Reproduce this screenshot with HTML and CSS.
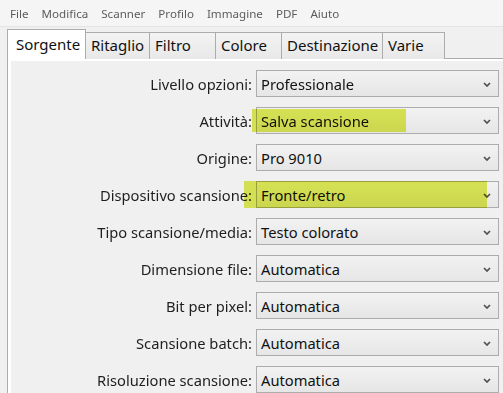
FILE: index.html
```html
<!DOCTYPE html>
<html lang="it">
<head>
    <meta charset="UTF-8">
    <meta name="viewport" content="width=device-width, initial-scale=1.0">
    <title>Impostazioni scanner</title>
    <link rel="stylesheet" href="styles.css">
</head>
<body>
    <div class="menubar">
        <span>File</span>
        <span>Modifica</span>
        <span>Scanner</span>
        <span>Profilo</span>
        <span>Immagine</span>
        <span>PDF</span>
        <span>Aiuto</span>
    </div>

    <div class="tabs">
        <div class="tab active">Sorgente</div>
        <div class="tab w64">Ritaglio</div>
        <div class="tab w67">Filtro</div>
        <div class="tab w66">Colore</div>
        <div class="tab w102">Destinazione</div>
        <div class="tab w62">Varie</div>
    </div>

    <div class="page">
        <div class="panel">
            <div class="label">Livello opzioni:</div>
            <div class="combo">Professionale<svg class="chev" viewBox="0 0 8 5"><path d="M1 1 L4 4 L7 1"/></svg></div>

            <div class="label">Attività:</div>
            <div class="combo">Salva scansione<svg class="chev" viewBox="0 0 8 5"><path d="M1 1 L4 4 L7 1"/></svg><span class="mark mark-short"></span></div>

            <div class="label">Origine:</div>
            <div class="combo">Pro 9010<svg class="chev" viewBox="0 0 8 5"><path d="M1 1 L4 4 L7 1"/></svg></div>

            <div class="label">Dispositivo scansione:</div>
            <div class="combo">Fronte/retro<svg class="chev" viewBox="0 0 8 5"><path d="M1 1 L4 4 L7 1"/></svg><span class="mark mark-long"></span></div>

            <div class="label">Tipo scansione/media:</div>
            <div class="combo">Testo colorato<svg class="chev" viewBox="0 0 8 5"><path d="M1 1 L4 4 L7 1"/></svg></div>

            <div class="label">Dimensione file:</div>
            <div class="combo">Automatica<svg class="chev" viewBox="0 0 8 5"><path d="M1 1 L4 4 L7 1"/></svg></div>

            <div class="label">Bit per pixel:</div>
            <div class="combo">Automatica<svg class="chev" viewBox="0 0 8 5"><path d="M1 1 L4 4 L7 1"/></svg></div>

            <div class="label">Scansione batch:</div>
            <div class="combo">Automatica<svg class="chev" viewBox="0 0 8 5"><path d="M1 1 L4 4 L7 1"/></svg></div>

            <div class="label">Risoluzione scansione:</div>
            <div class="combo">Automatica<svg class="chev" viewBox="0 0 8 5"><path d="M1 1 L4 4 L7 1"/></svg></div>
        </div>
    </div>
</body>
</html>
```

FILE: styles.css
```css
*{
    box-sizing: border-box;
}
body{
    margin: 0;
    background: #f0f0f0;
    font-family: "Noto Sans", "Open Sans", sans-serif;
    color: #1e1e1e;
    overflow: hidden;
}

/* menu */
.menubar{
    height: 27px;
    background: #f5f5f5;
    border-bottom: 1px solid #e4e4e4;
    display: flex;
    align-items: center;
    padding-left: 10px;
    gap: 13px;
    font-size: 11.6px;
    color: #5c5c5c;
}

/* tabs */
.tabs{
    display: flex;
    align-items: flex-end;
    margin-top: 2px;
    padding-left: 7px;
    height: 30px;
    position: relative;
    z-index: 1;
}
.tab{
    height: 27px;
    border: 1px solid #acacac;
    border-bottom: none;
    margin-left: -1px;
    padding: 0 5px;
    background: linear-gradient(#f3f3f3, #e8e8e8);
    font-size: 15px;
    line-height: 25px;
    color: #111;
    white-space: nowrap;
}
.tab.active{
    width: 79px;
    height: 30px;
    margin-left: 0;
    background: #fff;
    padding: 2px 8px 0 8px;
}
.w64{ width: 65px; }
.w67{ width: 67px; }
.w66{ width: 67px; }
.w102{ width: 102px; }
.w62{ width: 63px; }

.page{
    margin-left: 7px;
    margin-top: -1px;
    border: 1px solid #acacac;
    border-right: none;
    background: #fff;
    padding: 2px 0 0 3px;
    height: 400px;
}
.panel{
    background: #f0f0f0;
    height: 100%;
    padding-top: 9px;
    display: grid;
    grid-template-columns: 241px 243px;
    grid-auto-rows: 27px;
    column-gap: 4px;
    row-gap: 10px;
    align-content: start;
}
.label{
    text-align: right;
    font-size: 14.7px;
    line-height: 28px;
    white-space: nowrap;
}
.combo{
    position: relative;
    border: 1px solid #acacac;
    background: linear-gradient(#f2f2f2, #e6e6e6);
    font-size: 14.7px;
    line-height: 26px;
    padding-left: 4px;
    color: #111;
}
.chev{
    position: absolute;
    right: 7px;
    top: 11px;
    width: 8px;
    height: 5px;
    fill: none;
    stroke: #505050;
    stroke-width: 1.7;
}

/* marker highlights */
.mark{
    position: absolute;
    background: #e2ee58;
    mix-blend-mode: multiply;
}
.mark-short{
    left: -5px;
    top: 1px;
    width: 154px;
    height: 23px;
}
.mark-long{
    left: -13px;
    top: -1px;
    width: 243px;
    height: 27px;
}
```
